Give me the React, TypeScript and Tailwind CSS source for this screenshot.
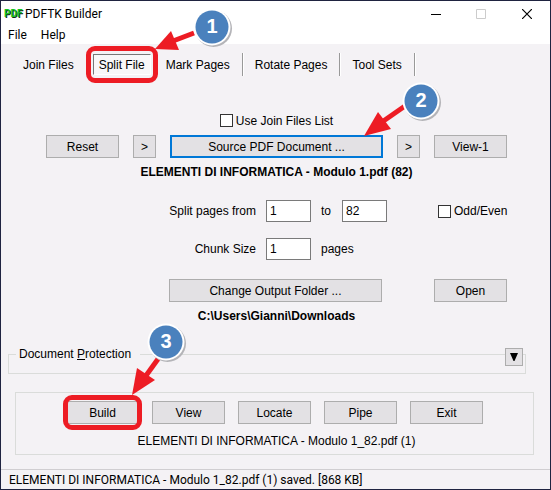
import React from "react";
import clsx from "clsx";

type ButtonProps = {
  children: React.ReactNode;
  className?: string;
  primary?: boolean;
};

const Button = ({ children, className, primary }: ButtonProps) => (
  <button
    type="button"
    className={clsx(
      "flex h-[23px] items-center justify-center bg-[#e3e1e4]",
      primary ? "border-2 border-[#0078d7]" : "border border-[#adadad]",
      className
    )}
  >
    {children}
  </button>
);

const Checkbox = ({ id, label }: { id: string; label: string }) => (
  <div className="flex items-center gap-[3px]">
    <input
      id={id}
      type="checkbox"
      className="size-[13px] shrink-0 appearance-none border border-[#333] bg-white checked:bg-[#0078d7]"
    />
    <label htmlFor={id} className="whitespace-nowrap">
      {label}
    </label>
  </div>
);

const NumberBox = ({ id, value }: { id: string; value: string }) => (
  <input
    id={id}
    type="text"
    defaultValue={value}
    className="h-[22px] w-[45px] border border-[#7a7a7a] bg-white px-[3px] pb-px outline-none"
  />
);

type MarkerProps = {
  className: string;
  number: number;
  x: number;
  y: number;
  head: string;
  shaft: string;
};

// numbered disc with an arrow pointing at a control
const Marker = ({ className, number, x, y, head, shaft }: MarkerProps) => (
  <svg
    width="80"
    height="80"
    className={clsx("pointer-events-none absolute z-10 overflow-visible", className)}
  >
    <path d={shaft} stroke="#ed1c24" strokeWidth="5" fill="none" />
    <polygon points={head} fill="#ed1c24" />
    <circle cx={x + 1.5} cy={y + 1.5} r="18.5" fill="#b4b4b8" />
    <circle cx={x} cy={y} r="18.5" fill="#fff" />
    <circle cx={x} cy={y} r="16.5" fill="#4a81bd" />
    <text
      x={x}
      y={y + 6}
      textAnchor="middle"
      fill="#fff"
      fontSize="20"
      fontWeight="700"
      fontFamily="Liberation Sans, Arial, sans-serif"
    >
      {number}
    </text>
  </svg>
);

const TitleBar = () => (
  <header className="bg-white font-[Roboto,sans-serif]">
    <div className="flex h-[25px] items-center pl-[3px]">
      <span className="w-[17px] shrink-0 text-[10px] font-bold text-[#12c422] [text-shadow:1px_1px_0_#123012]">
        PDF
      </span>
      <h1 className="ml-1 grow">PDFTK Builder</h1>
      <button type="button" aria-label="Minimize" className="flex h-full w-[45px] items-center justify-center">
        <svg width="10" height="10"><path d="M0 5.5h10" stroke="#000" /></svg>
      </button>
      <button type="button" aria-label="Maximize" disabled className="flex h-full w-[46px] items-center justify-center">
        <svg width="10" height="10"><path d="M.5.5h9v9h-9z" stroke="#ccc" fill="none" /></svg>
      </button>
      <button type="button" aria-label="Close" className="flex h-full w-[46px] items-center justify-center">
        <svg width="10" height="10"><path d="M0 0l10 10M10 0L0 10" stroke="#000" strokeWidth="1.2" /></svg>
      </button>
    </div>
    <nav className="flex h-[18px] items-center gap-[14px] pl-[7px]">
      <button type="button">File</button>
      <button type="button">Help</button>
    </nav>
  </header>
);

const Tabs = () => (
  <nav className="mt-[9px] flex h-[23px] items-stretch pl-[11px]">
    <button type="button" className="px-[11px]">Join Files</button>
    <div className="relative mr-[3px] ml-2 flex">
      <button
        type="button"
        className="my-px border border-t-[#777] border-r-white border-b-white border-l-[#777] bg-[#f8f7f8] px-[5px]"
      >
        Split File
      </button>
      <span className="pointer-events-none absolute -inset-x-[7px] -inset-y-[7px] rounded-[9px] border-[5px] border-[#ed1c24]" />
      <Marker
        number={1}
        className="-top-[53px] left-0"
        x={119}
        y={27}
        head="62,49 78,31 86,50"
        shaft="M80 41L101 33"
      />
    </div>
    {["Mark Pages", "Rotate Pages", "Tool Sets"].map((tab) => (
      <button
        key={tab}
        type="button"
        className="border-r border-[#999] px-3 shadow-[1px_0_0_#fff]"
      >
        {tab}
      </button>
    ))}
  </nav>
);

const SplitForm = () => (
  <form className="mx-auto mt-9 w-[463px] pl-0.5">
    <div className="flex h-[17px] justify-center">
      <Checkbox id="join-list" label="Use Join Files List" />
    </div>

    <div className="mt-1.5 flex gap-[14px]">
      <Button className="w-[73px]">Reset</Button>
      <Button className="w-[23px]">&gt;</Button>
      <div className="relative">
        <Button primary className="w-[213px]">Source PDF Document ...</Button>
        <Marker
          number={2}
          className="-top-[55px] left-[190px]"
          x={61}
          y={21}
          head="4,56 18,32 31,49"
          shaft="M22 42L45 26"
        />
      </div>
      <Button className="w-[23px]">&gt;</Button>
      <Button className="w-[73px]">View-1</Button>
    </div>
    <p className="mt-1 text-center leading-5 font-bold">
      ELEMENTI DI INFORMATICA - Modulo 1.pdf (82)
    </p>

    <div className="mt-[18px] flex items-center gap-[10px]">
      <label htmlFor="from" className="w-[210px] text-right">Split pages from</label>
      <NumberBox id="from" value="1" />
      <label htmlFor="to" className="w-[11px]">to</label>
      <NumberBox id="to" value="82" />
      <div className="ml-auto w-[69px]">
        <Checkbox id="odd-even" label="Odd/Even" />
      </div>
    </div>
    <div className="mt-4 flex items-center gap-[10px]">
      <label htmlFor="chunk" className="w-[210px] text-right">Chunk Size</label>
      <NumberBox id="chunk" value="1" />
      <span>pages</span>
    </div>

    <div className="mt-[19px] flex justify-end gap-[52px]">
      <Button className="w-[213px]">Change Output Folder ...</Button>
      <Button className="w-[73px]">Open</Button>
    </div>
    <p className="mt-1 text-center leading-5 font-bold">C:\Users\Gianni\Downloads</p>
  </form>
);

const App = () => {
  return (
    <div className="flex min-h-screen flex-col border border-[#1f2340] bg-[#f4f2f5] font-['Liberation_Sans',Arial,sans-serif] text-[12px] leading-4 text-black">
      <TitleBar />
      <Tabs />
      <main className="flex flex-col">
        <SplitForm />

        <div className="relative mt-5 mr-6 ml-[7px]">
          <fieldset className="h-7 border border-[#dadcda] pl-0.5">
            <legend className="ml-[5px] pr-[9px] pl-[3px]">
              Document <u>P</u>rotection
            </legend>
          </fieldset>
          <button
            type="button"
            aria-label="Expand document protection"
            className="absolute top-0.5 right-[3px] flex size-[18px] items-center justify-center border border-[#adadad] bg-[#e3e1e4]"
          >
            <svg width="10" height="10"><path d="M1 1h8L5.500 9h-1z" /></svg>
          </button>
        </div>

        <section className="mt-[18px] mr-4 ml-[14px] border border-[#dadcda] pt-2 pb-[3px]">
          <div className="flex justify-center gap-[13px]">
            <div className="relative">
              <Button className="w-[73px]">Build</Button>
              <span className="pointer-events-none absolute -inset-x-[3px] -inset-y-[6px] rounded-[9px] border-[5px] border-[#ed1c24]" />
              <Marker
                number={3}
                className="-top-[81px] left-[60px]"
                x={40}
                y={22}
                head="6,75 11,48 29,60"
                shaft="M19 57L32 39"
              />
            </div>
            <Button className="w-[73px]">View</Button>
            <Button className="w-[73px]">Locate</Button>
            <Button className="w-[73px]">Pipe</Button>
            <Button className="w-[73px]">Exit</Button>
          </div>
          <p className="mt-[7px] pl-1 text-center leading-5">
            ELEMENTI DI INFORMATICA - Modulo 1_82.pdf (1)
          </p>
        </section>
      </main>

      <footer className="mt-auto h-5 border-t border-[#d0ced1] pl-2 font-[Roboto,sans-serif] leading-5">
        ELEMENTI DI INFORMATICA - Modulo 1_82.pdf (1) saved. [868 KB]
      </footer>
    </div>
  );
};

export default App;
